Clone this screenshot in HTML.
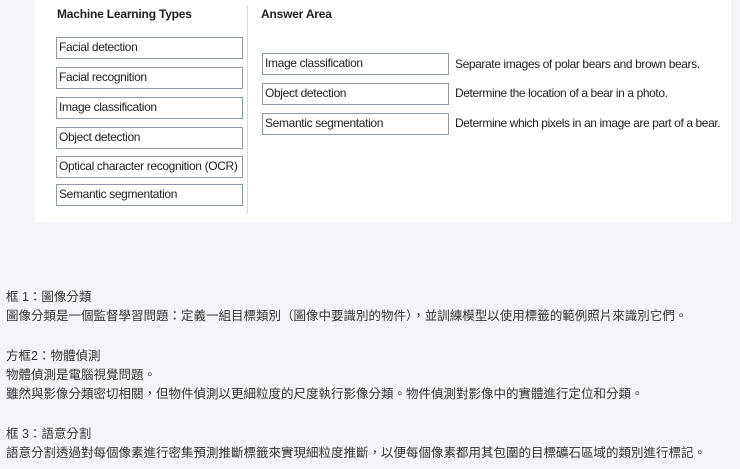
<!DOCTYPE html>
<html><head><meta charset="utf-8"><style>
body{margin:0;width:740px;height:469px;background:#f3f5f8;position:relative;overflow:hidden;font-family:"Liberation Sans",Arial,sans-serif;}
.img{position:absolute;left:35px;top:0;width:696px;height:222px;background:#fff;}
.a{position:absolute;font-size:12px;letter-spacing:-0.4px;color:#222;white-space:nowrap;}
.h{font-weight:bold;font-size:12px;letter-spacing:-0.2px;}
.b{position:absolute;border:1px solid #8a9bb0;box-sizing:border-box;font-size:12px;letter-spacing:-0.35px;color:#222;padding-left:2px;line-height:19px;white-space:nowrap;background:#fff;}
.t{position:absolute;left:6px;font-family:"Liberation Sans","Noto Sans CJK TC",sans-serif;font-size:12.5px;color:#333;white-space:nowrap;}
</style></head><body>
<div class="img"></div>
<div class="a h" style="left:57px;top:7px">Machine Learning Types</div>
<div class="a h" style="left:261px;top:7px">Answer Area</div>
<div style="position:absolute;left:247px;top:5px;width:1px;height:209px;background:#d4d9e0"></div>
<div class="b" style="left:56px;top:37px;width:187px;height:22px">Facial detection</div>
<div class="b" style="left:56px;top:67px;width:187px;height:22px">Facial recognition</div>
<div class="b" style="left:56px;top:97px;width:187px;height:22px">Image classification</div>
<div class="b" style="left:56px;top:127px;width:187px;height:22px">Object detection</div>
<div class="b" style="left:56px;top:156px;width:187px;height:22px">Optical character recognition (OCR)</div>
<div class="b" style="left:56px;top:184px;width:187px;height:22px">Semantic segmentation</div>
<div class="b" style="left:262px;top:53px;width:187px;height:22px">Image classification</div>
<div class="b" style="left:262px;top:83px;width:187px;height:22px">Object detection</div>
<div class="b" style="left:262px;top:113px;width:187px;height:22px">Semantic segmentation</div>
<div class="a" style="left:455px;top:57px">Separate images of polar bears and brown bears.</div>
<div class="a" style="left:455px;top:86px">Determine the location of a bear in a photo.</div>
<div class="a" style="left:455px;top:116px">Determine which pixels in an image are part of a bear.</div>
<div class="t" style="top:286px">框 1：圖像分類</div>
<div class="t" style="top:305px">圖像分類是一個監督學習問題：定義一組目標類別（圖像中要識別的物件），並訓練模型以使用標籤的範例照片來識別它們。</div>
<div class="t" style="top:345px">方框2：物體偵測</div>
<div class="t" style="top:364px">物體偵測是電腦視覺問題。</div>
<div class="t" style="top:383px">雖然與影像分類密切相關，但物件偵測以更細粒度的尺度執行影像分類。物件偵測對影像中的實體進行定位和分類。</div>
<div class="t" style="top:423px">框 3：語意分割</div>
<div class="t" style="top:442px">語意分割透過對每個像素進行密集預測推斷標籤來實現細粒度推斷，以便每個像素都用其包圍的目標礦石區域的類別進行標記。</div>
</body></html>
